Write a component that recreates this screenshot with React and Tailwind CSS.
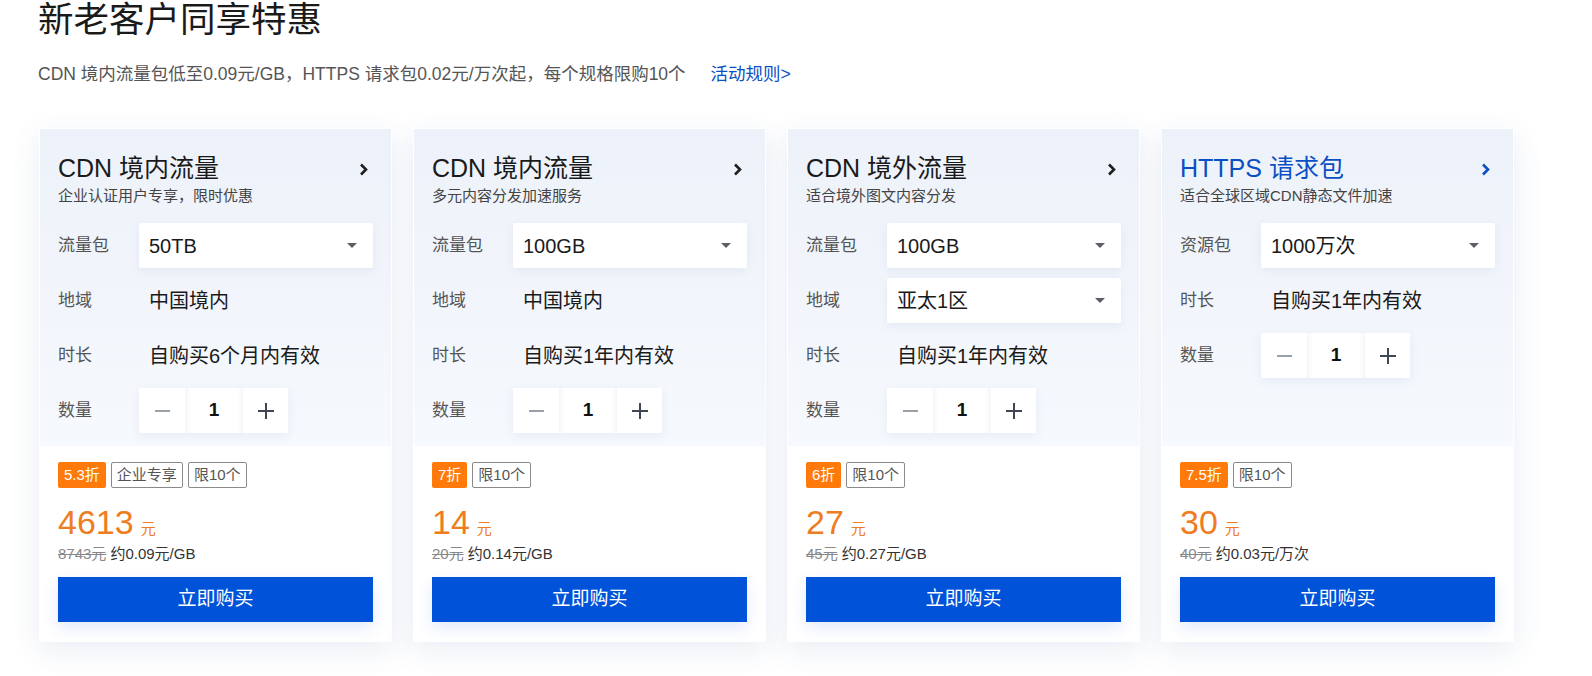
const FONT = { fontFamily: '"Liberation Sans", "Noto Sans CJK SC", sans-serif' }

const CARDS = [
  {
    title: 'CDN 境内流量',
    desc: '企业认证用户专享，限时优惠',
    rows: [
      { label: '流量包', select: '50TB' },
      { label: '地域', text: '中国境内' },
      { label: '时长', text: '自购买6个月内有效' },
    ],
    discount: '5.3折',
    tags: ['企业专享', '限10个'],
    price: '4613',
    old: '8743元',
    unit: '约0.09元/GB',
  },
  {
    title: 'CDN 境内流量',
    desc: '多元内容分发加速服务',
    rows: [
      { label: '流量包', select: '100GB' },
      { label: '地域', text: '中国境内' },
      { label: '时长', text: '自购买1年内有效' },
    ],
    discount: '7折',
    tags: ['限10个'],
    price: '14',
    old: '20元',
    unit: '约0.14元/GB',
  },
  {
    title: 'CDN 境外流量',
    desc: '适合境外图文内容分发',
    rows: [
      { label: '流量包', select: '100GB' },
      { label: '地域', select: '亚太1区' },
      { label: '时长', text: '自购买1年内有效' },
    ],
    discount: '6折',
    tags: ['限10个'],
    price: '27',
    old: '45元',
    unit: '约0.27元/GB',
  },
  {
    title: 'HTTPS 请求包',
    desc: '适合全球区域CDN静态文件加速',
    blue: true,
    rows: [
      { label: '资源包', select: '1000万次' },
      { label: '时长', text: '自购买1年内有效' },
    ],
    discount: '7.5折',
    tags: ['限10个'],
    price: '30',
    old: '40元',
    unit: '约0.03元/万次',
  },
]

function Chevron({ blue }) {
  return (
    <svg width="9" height="13" viewBox="0 0 9 13" fill="none" aria-hidden="true">
      <polyline points="2,1.5 7,6.5 2,11.5" stroke={blue ? '#0a4fc4' : '#1f1f1f'} strokeWidth="2.6" strokeLinejoin="miter" />
    </svg>
  )
}

function Row({ label, children }) {
  return (
    <div className="flex items-center h-[45px]">
      <div className="w-[81px] shrink-0 text-[17px] text-[#555]">{label}</div>
      {children}
    </div>
  )
}

function Select({ value }) {
  return (
    <div className="flex-1 h-[45px] bg-white rounded-[2px] shadow-[0_3px_10px_rgba(60,90,150,0.08)] flex items-center justify-between pl-[10px] pr-4">
      <span className="text-[20px] text-[#1a1a1a]">{value}</span>
      <span className="w-0 h-0 border-l-[5px] border-r-[5px] border-t-[5px] border-l-transparent border-r-transparent border-t-[#5b5f66]" />
    </div>
  )
}

function Stepper() {
  return (
    <div className="flex h-[45px] shadow-[0_3px_10px_rgba(60,90,150,0.08)]">
      <div className="w-[46px] bg-white flex items-center justify-center">
        <span className="w-[15px] h-[2px] bg-[#9aa0a8]" />
      </div>
      <div className="w-[58px] bg-white flex items-center justify-center shadow-[inset_6px_0_6px_-6px_rgba(60,90,150,0.12),inset_-6px_0_6px_-6px_rgba(60,90,150,0.12)]">
        <span className="text-[19px] font-bold text-[#111]">1</span>
      </div>
      <div className="w-[45px] bg-white flex items-center justify-center relative">
        <span className="w-[16px] h-[2px] bg-[#3f4654]" />
        <span className="absolute w-[2px] h-[16px] bg-[#3f4654]" />
      </div>
    </div>
  )
}

function Card({ card }) {
  return (
    <div className="w-[353px] h-[514px] flex flex-col bg-white border border-white shadow-[0_8px_28px_rgba(40,80,150,0.10)]">
      <div className="flex-1 bg-gradient-to-b from-[#edf1f9] to-[#f6f9fd] pl-[18px] pr-[18px] pt-[24px]">
        <div className="flex items-center justify-between h-8 pr-[5px]">
          <span className={`text-[25px] ${card.blue ? 'text-[#0a4fc4]' : 'text-[#1a1a1a]'}`}>{card.title}</span>
          <Chevron blue={card.blue} />
        </div>
        <div className="text-[15px] leading-5 text-[#444] mt-[1px]">{card.desc}</div>
        <div className="mt-[17px] flex flex-col gap-[10px]">
          {card.rows.map((r, i) => (
            <Row key={i} label={r.label}>
              {r.select ? <Select value={r.select} /> : <span className="pl-[10px] text-[20px] text-[#1a1a1a]">{r.text}</span>}
            </Row>
          ))}
          <Row label="数量">
            <Stepper />
          </Row>
        </div>
      </div>
      <div className="h-[195px] pl-[18px] pr-[18px] pt-4">
        <div className="flex gap-[5px]">
          <span className="h-[26px] px-[6px] rounded-[2px] bg-[#ff7a0a] text-white text-[15px] leading-[26px]">{card.discount}</span>
          {card.tags.map((t) => (
            <span key={t} className="h-[26px] px-[5px] rounded-[2px] border border-[#8a8a8a] text-[#555] text-[15px] leading-[24px]">{t}</span>
          ))}
        </div>
        <div className="flex items-baseline h-[40px] mt-[14px] text-[#ee7d22]">
          <span className="text-[34px] leading-[40px]">{card.price}</span>
          <span className="text-[15px] ml-[7px]">元</span>
        </div>
        <div className="text-[15px] leading-5 mt-[2px]">
          <span className="line-through text-[#888]">{card.old}</span>
          <span className="ml-[4px] text-[#333]">{card.unit}</span>
        </div>
        <button className="mt-[13px] w-full h-[45px] bg-[#0052d9] text-white text-[19px] shadow-[0_6px_16px_rgba(0,82,217,0.12)]">
          立即购买
        </button>
      </div>
    </div>
  )
}

export default function App() {
  return (
    <div className="w-[1592px] h-[676px] bg-white pl-[38px] overflow-hidden" style={FONT}>
      <h1 className="text-[35.5px] leading-[40px] text-[#1a1a1a]">新老客户同享特惠</h1>
      <div className="flex items-center mt-[22px] h-6 text-[17.5px]">
        <span className="text-[#555]">CDN 境内流量包低至0.09元/GB，HTTPS 请求包0.02元/万次起，每个规格限购10个</span>
        <a className="ml-[25px] text-[#0a4fc4]">活动规则&gt;</a>
      </div>
      <div className="flex gap-[21px] mt-[42px] ml-px">
        {CARDS.map((c, i) => (
          <Card key={i} card={c} />
        ))}
      </div>
    </div>
  )
}
